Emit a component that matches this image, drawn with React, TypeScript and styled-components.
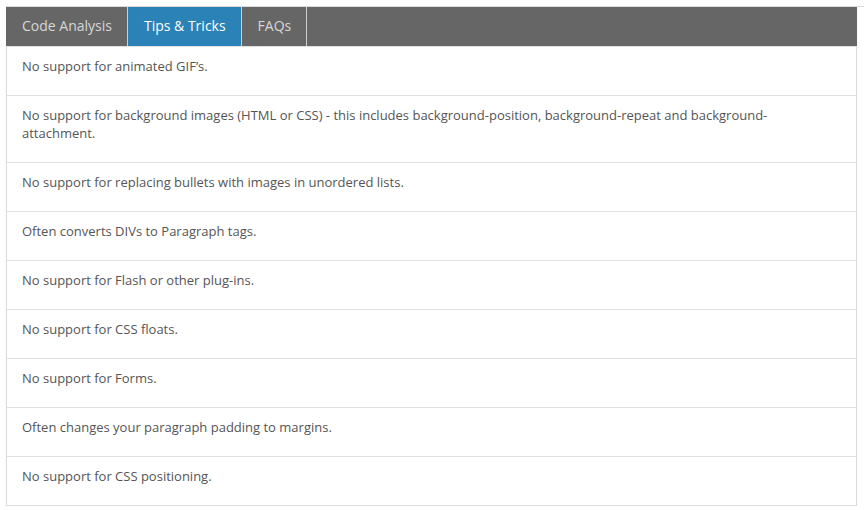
import React, { useState } from "react";
import styled, { createGlobalStyle } from "styled-components";

const Global = createGlobalStyle`
  html, body { margin: 0; padding: 0; background: #fff; }
  body { font-family: "Open Sans", "Liberation Sans", sans-serif; }
`;

const Page = styled.div`
  padding: 6px 0 0 6px;
`;

const Frame = styled.div`
  border-top: 1px solid #dcdcdc;
`;

const Panel = styled.div`
  width: 851px;
  box-shadow: 0 1px 2px rgba(0, 0, 0, 0.06);
`;

const TabBar = styled.div`
  display: flex;
  height: 39px;
  background: #666666;
  border-bottom: 1px solid #e0e0e0;
`;

const Tab = styled.div<{ $active?: boolean }>`
  display: flex;
  align-items: center;
  padding: 0 15px 3px 16px;
  border-right: 1px solid #cfcfcf;
  background: ${(p) => (p.$active ? "#2a82b7" : "transparent")};
  color: ${(p) => (p.$active ? "#ffffff" : "#d6d6d6")};
  font-size: 14px;
  cursor: pointer;
`;

const List = styled.div`
  border: 1px solid #dcdcdc;
  border-top: none;
`;

const Row = styled.div`
  padding: 10px 60px 20px 15px;
  font-size: 13px;
  line-height: 18px;
  color: #555555;
  border-bottom: 1px solid #e0e0e0;
  &:last-child {
    border-bottom: none;
  }
`;

const tips = [
  "No support for animated GIF’s.",
  "No support for background images (HTML or CSS) - this includes background-position, background-repeat and background-attachment.",
  "No support for replacing bullets with images in unordered lists.",
  "Often converts DIVs to Paragraph tags.",
  "No support for Flash or other plug-ins.",
  "No support for CSS floats.",
  "No support for Forms.",
  "Often changes your paragraph padding to margins.",
  "No support for CSS positioning.",
];

const tabs = ["Code Analysis", "Tips & Tricks", "FAQs"];

export default function App() {
  const [active, setActive] = useState(1);
  return (
    <Page>
      <Global />
      <Frame>
        <Panel>
          <TabBar>
            {tabs.map((t, i) => (
              <Tab key={t} $active={i === active} onClick={() => setActive(i)}>
                {t}
              </Tab>
            ))}
          </TabBar>
          <List>
            {tips.map((t) => (
              <Row key={t}>{t}</Row>
            ))}
          </List>
        </Panel>
      </Frame>
    </Page>
  );
}
